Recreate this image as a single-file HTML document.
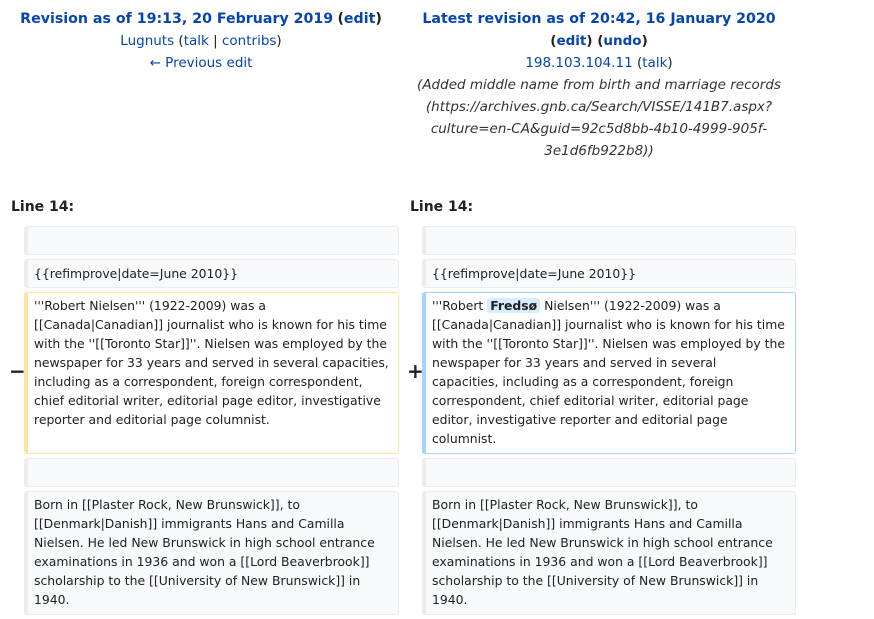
<!DOCTYPE html>
<html><head><meta charset="utf-8"><style>
body{margin:0;width:874px;height:619px;background:#fff;font-family:"DejaVu Sans","Liberation Sans",sans-serif;color:#202122;position:relative;overflow:hidden}
a,.l{color:#0645ad;text-decoration:none}
.hd{position:absolute;text-align:center;font-size:13.5px;line-height:22px}
.hd b{font-weight:bold}
.ln{position:absolute;top:199px;font-weight:bold;font-size:14px}
.bx{position:absolute;box-sizing:border-box;border:1px solid #eaecf0;border-left:4px solid #eaecf0;background:#f8f9fa;border-radius:3px;font-size:12.4px;line-height:19px;padding:3px 6px 0 6px}
.del{background:#fff;border-color:#ffe49c}
.add{background:#fff;border-color:#a3d3ff;padding-right:9px}
.mk{position:absolute;font-size:20px;font-weight:bold}
.hl{background:#d8ecff;font-weight:bold;border-radius:3px;padding:0 3px}
</style></head><body>
<div class="hd" style="left:0;width:402px;top:8px">
<span class="l"><b style="font-size:14.2px">Revision as of 19:13, 20 February 2019</b></span> <b style="font-size:14.2px">(<span class="l">edit</span>)</b><br>
<span class="l">Lugnuts</span> (<span class="l">talk</span> | <span class="l">contribs</span>)<br>
<span class="l">← Previous edit</span>
</div>
<div class="hd" style="left:398px;width:402px;top:8px">
<span class="l"><b style="font-size:14.2px">Latest revision as of 20:42, 16 January 2020</b></span><br>
<b>(<span class="l">edit</span>) (<span class="l">undo</span>)</b><br>
<span class="l">198.103.104.11</span> (<span class="l">talk</span>)<br>
<i style="color:#333">(Added middle name from birth and marriage records<br>(https://archives.gnb.ca/Search/VISSE/141B7.aspx?<br>culture=en-CA&amp;guid=92c5d8bb-4b10-4999-905f-<br>3e1d6fb922b8))</i>
</div>
<div class="ln" style="left:11px">Line 14:</div>
<div class="ln" style="left:410px">Line 14:</div>

<div class="bx" style="left:24px;top:226px;width:375px;height:29px"></div>
<div class="bx" style="left:422px;top:226px;width:374px;height:29px"></div>
<div class="bx" style="left:24px;top:259px;width:375px;height:29px;padding-top:4px">{{refimprove|date=June 2010}}</div>
<div class="bx" style="left:422px;top:259px;width:374px;height:29px;padding-top:4px">{{refimprove|date=June 2010}}</div>

<div class="mk" style="left:9px;top:359px">−</div>
<div class="bx del" style="left:24px;top:292px;width:375px;height:162px">'''Robert Nielsen''' (1922-2009) was a [[Canada|Canadian]] journalist who is known for his time with the ''[[Toronto Star]]''. Nielsen was employed by the newspaper for 33 years and served in several capacities, including as a correspondent, foreign correspondent, chief editorial writer, editorial page editor, investigative reporter and editorial page columnist.</div>
<div class="mk" style="left:407px;top:359px">+</div>
<div class="bx add" style="left:422px;top:292px;width:374px;height:162px">'''Robert <span class="hl">Fredsø</span> Nielsen''' (1922-2009) was a [[Canada|Canadian]] journalist who is known for his time with the ''[[Toronto Star]]''. Nielsen was employed by the newspaper for 33 years and served in several<br>capacities, including as a correspondent, foreign correspondent, chief editorial writer, editorial page editor, investigative reporter and editorial page columnist.</div>

<div class="bx" style="left:24px;top:458px;width:375px;height:29px"></div>
<div class="bx" style="left:422px;top:458px;width:374px;height:29px"></div>
<div class="bx" style="left:24px;top:491px;width:375px;height:124px">Born in [[Plaster Rock, New Brunswick]], to [[Denmark|Danish]] immigrants Hans and Camilla Nielsen. He led New Brunswick in high school entrance examinations in 1936 and won a [[Lord Beaverbrook]] scholarship to the [[University of New Brunswick]] in 1940.</div>
<div class="bx" style="left:422px;top:491px;width:374px;height:124px">Born in [[Plaster Rock, New Brunswick]], to [[Denmark|Danish]] immigrants Hans and Camilla Nielsen. He led New Brunswick in high school entrance examinations in 1936 and won a [[Lord Beaverbrook]] scholarship to the [[University of New Brunswick]] in 1940.</div>
</body></html>
